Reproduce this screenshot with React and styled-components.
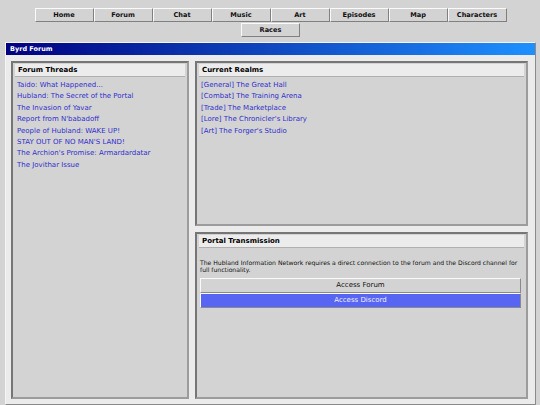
import React from 'react'
import styled, { createGlobalStyle } from 'styled-components'

const navItems = ['Home', 'Forum', 'Chat', 'Music', 'Art', 'Episodes', 'Map', 'Characters', 'Races']

const threads = [
   'Taido: What Happened...',
   'Hubland: The Secret of the Portal',
   'The Invasion of Yavar',
   "Report from N'babadoff",
   'People of Hubland: WAKE UP!',
   "STAY OUT OF NO MAN'S LAND!",
   "The Archion's Promise: Armardardatar",
   'The Jovithar Issue',
]

const realms = [
   '[General] The Great Hall',
   '[Combat] The Training Arena',
   '[Trade] The Marketplace',
   "[Lore] The Chronicler's Library",
   "[Art] The Forger's Studio",
]

const GlobalStyle = createGlobalStyle`
   html, body {
      margin: 0;
      padding: 0;
      background: #d3d3d3;
   }
   body {
      font-family: "DejaVu Sans", Verdana, sans-serif;
   }
`

const App = () => {
   return (
      <>
         <GlobalStyle />
         <Page>
            <Nav>
               {navItems.map(n => (
                  <NavButton key={n}>{n}</NavButton>
               ))}
            </Nav>
            <Window>
               <TitleBar>Byrd Forum</TitleBar>
               <WindowBody>
                  <Panel>
                     <PanelHeader>Forum Threads</PanelHeader>
                     <LinkList>
                        {threads.map(t => (
                           <LinkItem key={t} href="#">{t}</LinkItem>
                        ))}
                     </LinkList>
                  </Panel>
                  <RightCol>
                     <Panel $height="165px">
                        <PanelHeader>Current Realms</PanelHeader>
                        <LinkList>
                           {realms.map(r => (
                              <LinkItem key={r} href="#">{r}</LinkItem>
                           ))}
                        </LinkList>
                     </Panel>
                     <Panel $grow>
                        <PanelHeader>Portal Transmission</PanelHeader>
                        <Notice>
                           The Hubland Information Network requires a direct connection to the forum and the Discord channel for full functionality.
                        </Notice>
                        <ActionButton>Access Forum</ActionButton>
                        <ActionButton $discord>Access Discord</ActionButton>
                     </Panel>
                  </RightCol>
               </WindowBody>
            </Window>
         </Page>
      </>
   )
}

const Page = styled.div`
   width: 540px;
   height: 405px;
   overflow: hidden;
   box-sizing: border-box;
   padding: 8px 4px 0 5px;
`

const Nav = styled.nav`
   display: flex;
   flex-wrap: wrap;
   justify-content: center;
   row-gap: 1px;
   width: 480px;
   margin: 0 auto;
`

const NavButton = styled.div`
   width: 59px;
   height: 14px;
   box-sizing: border-box;
   border: 1px solid;
   border-color: #fafafa #808080 #808080 #fafafa;
   background: #d3d3d3;
   font-size: 6.6px;
   font-weight: bold;
   line-height: 12px;
   text-align: center;
   color: #111;
`

const Window = styled.div`
   margin-top: 5px;
   border: 1px solid;
   border-color: #f4f4f4 #8a8a8a #8a8a8a #f4f4f4;
   background: #ebebeb;
`

const TitleBar = styled.div`
   height: 12px;
   line-height: 12px;
   padding-left: 4px;
   background: linear-gradient(to right, #000080, #1e90ff);
   color: #fff;
   font-size: 6.5px;
   font-weight: bold;
`

const WindowBody = styled.div`
   display: grid;
   grid-template-columns: 178px 1fr;
   gap: 6px;
   height: 338px;
   padding: 6px 7px 5px 5px;
`

const RightCol = styled.div`
   display: flex;
   flex-direction: column;
   gap: 6px;
   min-height: 0;
`

const Panel = styled.section`
   box-sizing: border-box;
   border: 2px solid;
   border-color: #767676 #9c9c9c #9c9c9c #767676;
   background: #d3d3d3;
   padding: 1px 2px;
   height: ${p => p.$height || 'auto'};
   flex: ${p => (p.$grow ? 1 : 'none')};
`

const PanelHeader = styled.h3`
   margin: 0;
   height: 12px;
   line-height: 12px;
   padding: 0 3px;
   background: #ececec;
   border-bottom: 1px solid #b0b0b0;
   font-size: 7px;
   font-weight: bold;
   color: #000;
`

const LinkList = styled.div`
   padding: 3px 2px;
`

const LinkItem = styled.a`
   display: block;
   color: #3030cc;
   text-decoration: none;
   font-size: 7px;
   line-height: 11.4px;
`

const Notice = styled.p`
   margin: 11px 2px 5px 1px;
   font-size: 6.1px;
   line-height: 7px;
   color: #111;
`

const ActionButton = styled.div`
   height: 15px;
   margin: 0 3px 0 1px;
   box-sizing: border-box;
   border: 1px solid;
   border-color: #fafafa #8a8a8a #8a8a8a #fafafa;
   background: ${p => (p.$discord ? '#5865f2' : '#d3d3d3')};
   color: ${p => (p.$discord ? '#eef0ff' : '#111')};
   font-size: 7px;
   line-height: 13px;
   text-align: center;
`

export default App
